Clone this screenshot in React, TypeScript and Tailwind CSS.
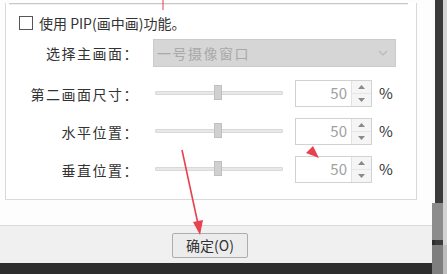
import React from 'react';

const font = "font-['Microsoft_YaHei','Noto_Sans_CJK_SC',sans-serif]";

// Slider row: label, track with thumb, spin box and percent sign
const SliderRow = ({ label, className }: { label: string; className?: string }) => (
  <div className={`flex h-[27px] items-center ${className ?? ''}`}>
    <div className="w-[133px] text-right text-[14px] leading-[14px] tracking-[1.5px] text-[#333]">{label}</div>
    <div className="relative ml-[14px] h-[27px] w-[132px]">
      <div className="absolute left-[2px] top-[11px] h-[4px] w-[128px] rounded-[1px] border border-[#d9d9d9] bg-[#e8e8e8]" />
      <div className="absolute left-[61px] top-[5px] h-[15px] w-[8px] border border-[#c0c0c0] bg-[#d0d0d0]" />
    </div>
    <div className="ml-[10px] flex h-[27px] w-[77px] border border-[#d2d2d2] bg-white">
      <div className="flex flex-1 items-center justify-end pr-[4px] text-[15px] text-[#a0a0a0]">50</div>
      <div className="flex w-[20px] flex-col border-l border-[#e2e2e2] bg-[#f5f5f5]">
        <div className="flex flex-1 items-center justify-center border-b border-[#e6e6e6]">
          <svg width="7" height="4" viewBox="0 0 7 4"><polygon points="0,4 3.5,0 7,4" fill="#8a8a8a" /></svg>
        </div>
        <div className="flex flex-1 items-center justify-center">
          <svg width="7" height="4" viewBox="0 0 7 4"><polygon points="0,0 3.5,4 7,0" fill="#8a8a8a" /></svg>
        </div>
      </div>
    </div>
    <div className="ml-[7px] text-[15px] text-[#333]">%</div>
  </div>
);

export default function App() {
  return (
    <div className={`relative flex h-[274px] w-[447px] overflow-hidden bg-white ${font}`}>
      {/* dialog body */}
      <div className="flex w-[432px] flex-col">
        <div className="h-[225px] bg-[#fdfdfd] pl-[5px]">
          <div className="h-[197px] w-[412px] border-x border-b border-[#d9d9d9] bg-white">
            <div className="ml-[3px] mt-[3px] h-[1px] w-[399px] bg-[#c9c9c9]" />
            <div className="ml-[3px] h-[1px] w-[399px] bg-[#efefef]" />

            {/* PIP checkbox */}
            <div className="ml-[13px] mt-[11px] flex h-[14px] items-center">
              <div className="h-[14px] w-[14px] border border-[#555] bg-white" />
              <span className="ml-[6px] text-[14px] leading-[14px] text-[#333]">使用 PIP(画中画)功能。</span>
            </div>

            {/* main view select */}
            <div className="mt-[9px] flex h-[28px] items-center">
              <div className="w-[133px] text-right text-[14px] leading-[14px] tracking-[1.5px] text-[#333]">选择主画面：</div>
              <div className="ml-[14px] flex h-[28px] w-[243px] items-center border border-[#cbcbcb] bg-[#d6d6d6]">
                <span className="flex-1 pl-[3px] text-[14px] tracking-[1.5px] text-[#a9a9a9]">一号摄像窗口</span>
                <svg width="10" height="6" viewBox="0 0 10 6" className="mr-[7px]">
                  <polyline points="1,1 5,5 9,1" fill="none" stroke="#b8b8b8" strokeWidth="1.2" />
                </svg>
              </div>
            </div>

            <SliderRow label="第二画面尺寸：" className="mt-[13px]" />
            <SliderRow label="水平位置：" className="mt-[11px]" />
            <SliderRow label="垂直位置：" className="mt-[11px]" />
          </div>
        </div>

        {/* footer */}
        <div className="h-[38px] border-t border-[#d9d9d9] bg-[#f0f0f0] pl-[172px] pt-[7px]">
          <button className="flex h-[25px] w-[76px] items-center justify-center rounded-[2px] border border-[#adadad] bg-[#ececec] text-[14px] text-[#333]">
            确定(O)
          </button>
        </div>
        <div className="h-[11px] bg-[#2d2d2d]" />
      </div>

      {/* right window edge */}
      <div className="flex w-[15px] flex-col">
        <div className="flex h-[203px]">
          <div className="w-[3px] bg-[#fafafa]" />
          <div className="w-[8px] bg-[#3a3a3a]" />
          <div className="w-[4px] bg-[#d4d4d4]" />
        </div>
        <div className="flex h-[37px]">
          <div className="w-[11px] bg-[#8c8c8c]" />
          <div className="w-[4px] bg-[#d4d4d4]" />
        </div>
        <div className="flex h-[5px]">
          <div className="w-[3px] bg-[#2d2d2d]" />
          <div className="w-[8px] bg-[#3a3a3a]" />
          <div className="w-[4px] bg-[#d4d4d4]" />
        </div>
        <div className="flex flex-1">
          <div className="w-[11px] bg-[#7e7e7e]" />
          <div className="w-[4px] bg-[#bdbdbd]" />
        </div>
      </div>

      {/* red annotation marks */}
      <svg className="pointer-events-none absolute left-0 top-0" width="447" height="274" viewBox="0 0 447 274">
        <line x1="163" y1="0" x2="163" y2="10" stroke="#e0404d" strokeWidth="1" />
        <line x1="182" y1="150" x2="198" y2="224" stroke="#e8414f" strokeWidth="1.6" />
        <polygon points="193,222 203,220 200,235" fill="#e8414f" />
        <polygon points="306,153 313,146 319,158" fill="#e8414f" />
      </svg>
    </div>
  );
}
